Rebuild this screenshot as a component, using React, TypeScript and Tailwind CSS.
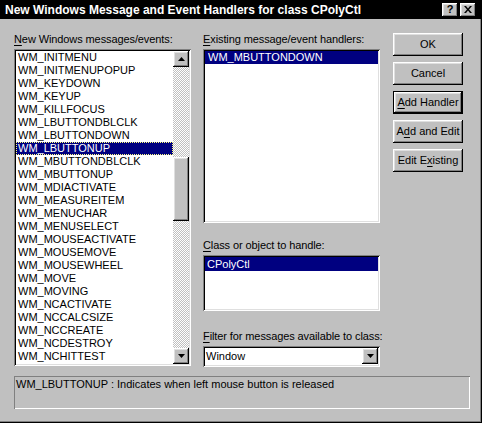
import React from 'react';

const messages = [
  'WM_INITMENU',
  'WM_INITMENUPOPUP',
  'WM_KEYDOWN',
  'WM_KEYUP',
  'WM_KILLFOCUS',
  'WM_LBUTTONDBLCLK',
  'WM_LBUTTONDOWN',
  'WM_LBUTTONUP',
  'WM_MBUTTONDBLCLK',
  'WM_MBUTTONUP',
  'WM_MDIACTIVATE',
  'WM_MEASUREITEM',
  'WM_MENUCHAR',
  'WM_MENUSELECT',
  'WM_MOUSEACTIVATE',
  'WM_MOUSEMOVE',
  'WM_MOUSEWHEEL',
  'WM_MOVE',
  'WM_MOVING',
  'WM_NCACTIVATE',
  'WM_NCCALCSIZE',
  'WM_NCCREATE',
  'WM_NCDESTROY',
  'WM_NCHITTEST',
];

// win95 bevels
const raised =
  'shadow-[inset_-1px_-1px_#000,inset_1px_1px_#fff,inset_-2px_-2px_#808080,inset_2px_2px_#dfdfdf]';
const sunken =
  'shadow-[inset_1px_1px_#808080,inset_-1px_-1px_#fff,inset_2px_2px_#000,inset_-2px_-2px_#dfdfdf]';

const Arrow = ({ down }: { down?: boolean }) => (
  <div className={`w-4 h-4 shrink-0 bg-[#c0c0c0] flex items-center justify-center ${raised}`}>
    <svg width="7" height="4" viewBox="0 0 7 4">
      {down ? <polygon points="0,0 7,0 3.5,4" fill="#000" /> : <polygon points="3.5,0 7,4 0,4" fill="#000" />}
    </svg>
  </div>
);

const Label = ({ u, rest }: { u: string; rest: string }) => (
  <div className="h-4 leading-[13px] whitespace-nowrap tracking-[-0.1px]">
    <span className="underline underline-offset-[2px]">{u}</span>
    {rest}
  </div>
);

const Button = ({ children, isDefault }: { children: React.ReactNode; isDefault?: boolean }) => (
  <div className={`h-[23px] w-[70px] ${isDefault ? 'border border-black' : ''}`}>
    <button
      className={`w-full h-full bg-[#c0c0c0] text-black flex items-center justify-center whitespace-nowrap ${raised}`}
    >
      {children}
    </button>
  </div>
);

export default function App() {
  return (
    <div
      className="w-[482px] h-[423px] flex flex-col bg-[#c0c0c0] text-[11px] text-black shadow-[inset_-1px_-1px_#000,inset_-2px_-2px_#808080]"
      style={{ fontFamily: '"Liberation Sans", Arial, sans-serif' }}
    >
      {/* Title bar */}
      <div className="h-[19px] bg-black flex items-center pl-[5px] pr-[6px] shrink-0">
        <div className="flex-1 text-white font-bold text-[12px] leading-none">
          New Windows Message and Event Handlers for class CPolyCtl
        </div>
        <div className={`w-4 h-[14px] bg-[#c0c0c0] flex items-center justify-center font-bold text-[11px] leading-none ${raised}`}>
          ?
        </div>
        <div className={`w-4 h-[14px] ml-[2px] bg-[#c0c0c0] flex items-center justify-center ${raised}`}>
          <svg width="8" height="7" viewBox="0 0 8 7">
            <path d="M0 0h2l2 2.5L6 0h2L5 3.5 8 7H6L4 4.5 2 7H0l3-3.5z" fill="#000" />
          </svg>
        </div>
      </div>

      {/* Body */}
      <div className="flex pl-[14px] pt-[14px]">
        {/* Left column */}
        <div className="w-[177px] flex flex-col">
          <Label u="N" rest="ew Windows messages/events:" />
          <div className={`h-[317px] p-[2px] bg-white flex ${sunken}`}>
            <div className="flex-1 flex flex-col">
              {messages.map((m) =>
                m === 'WM_LBUTTONUP' ? (
                  <div
                    key={m}
                    className="h-[13px] leading-[11px] pl-[1px] bg-[#000080] text-white border border-dotted border-[#ffff80]"
                  >
                    {m}
                  </div>
                ) : (
                  <div key={m} className="h-[13px] leading-[13px] pl-[2px]">
                    {m}
                  </div>
                )
              )}
            </div>
            <div className="w-4 flex flex-col bg-[repeating-conic-gradient(#c0c0c0_0_25%,#fff_0_50%)] bg-[length:2px_2px]">
              <Arrow />
              <div className="h-[90px]" />
              <div className={`h-[64px] bg-[#c0c0c0] ${raised}`} />
              <div className="flex-1" />
              <Arrow down />
            </div>
          </div>
        </div>

        {/* Middle column */}
        <div className="w-[177px] ml-[12px] flex flex-col">
          <Label u="E" rest="xisting message/event handlers:" />
          <div className={`h-[174px] p-[2px] bg-white ${sunken}`}>
            <div className="h-[13px] leading-[13px] pl-[3px] bg-[#000080] text-white">WM_MBUTTONDOWN</div>
          </div>

          <div className="mt-[16px]">
            <Label u="C" rest="lass or object to handle:" />
          </div>
          <div className={`h-[56px] p-[2px] bg-white ${sunken}`}>
            <div className="h-[14px] leading-[14px] pl-[2px] bg-[#000080] text-white">CPolyCtl</div>
          </div>

          <div className="mt-[19px]">
            <Label u="F" rest="ilter for messages available to class:" />
          </div>
          <div className={`h-[21px] p-[2px] bg-white flex ${sunken}`}>
            <div className="flex-1 leading-[17px] pl-[1px]">Window</div>
            <div className="h-[17px]">
              <Arrow down />
            </div>
          </div>
        </div>

        {/* Right buttons */}
        <div className="ml-[13px] flex flex-col gap-[6px]">
          <Button>OK</Button>
          <Button>Cancel</Button>
          <Button isDefault>
            <span className="underline underline-offset-[2px]">A</span>dd Handler
          </Button>
          <Button>
            A<span className="underline underline-offset-[2px]">d</span>d and Edit
          </Button>
          <Button>
            Edit E<span className="underline underline-offset-[2px]">x</span>isting
          </Button>
        </div>
      </div>

      {/* Status */}
      <div className="pl-[14px] mt-[9px]">
        <div className="w-[456px] h-[33px] pl-[2px] pt-[2px] leading-[13px] shadow-[inset_1px_1px_#808080,inset_-1px_-1px_#fff]">
          WM_LBUTTONUP : Indicates when left mouse button is released
        </div>
      </div>
    </div>
  );
}
